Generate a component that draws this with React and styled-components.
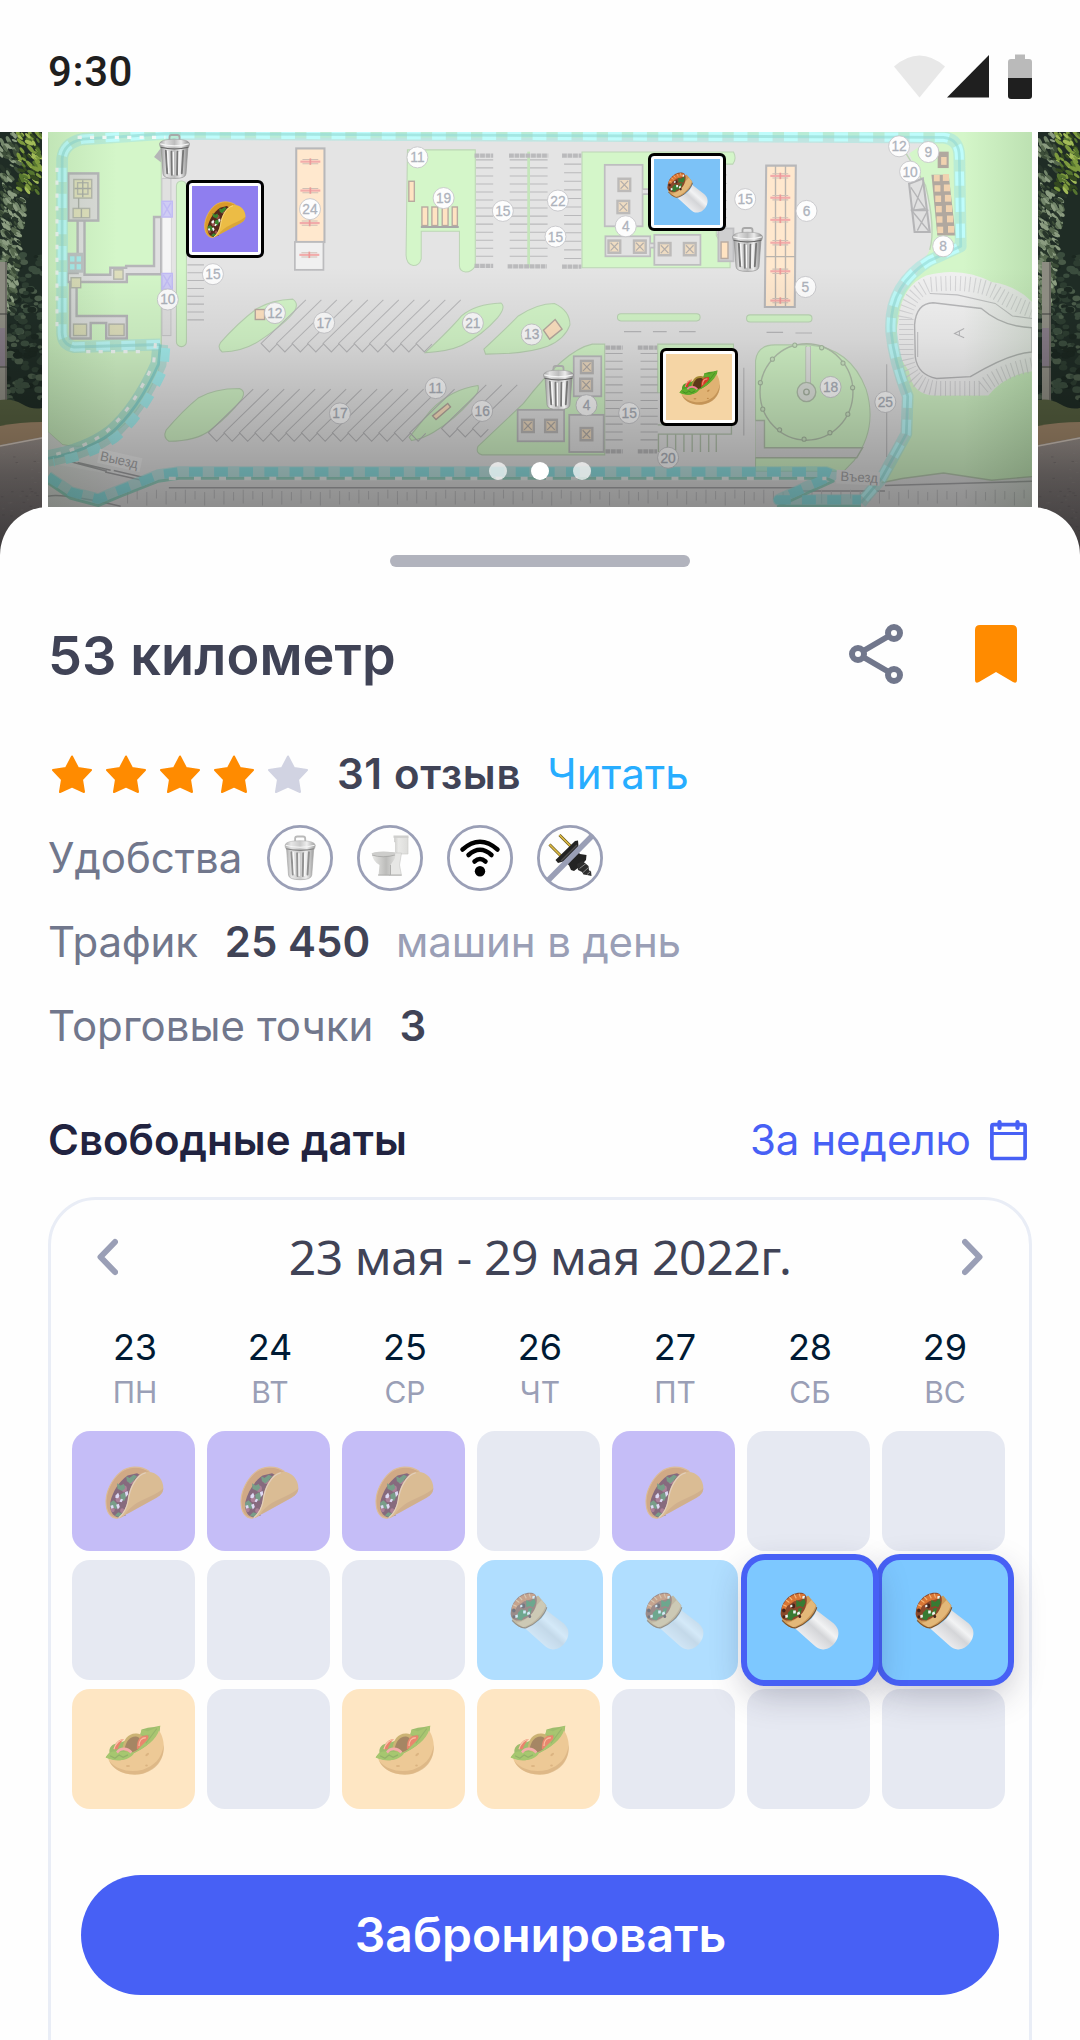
import React from "react";
import styled, { createGlobalStyle } from "styled-components";

const GlobalStyle = createGlobalStyle`
  *, *::before, *::after { box-sizing: border-box; }
  body { margin: 0; background: #fff; }
`;

/* ---------- layout ---------- */

const Screen = styled.main`
  width: 1080px;
  height: 2040px;
  overflow: hidden;
  background: #fefefe;
  font-family: Inter, "Noto Sans", sans-serif;
  display: flex;
  flex-direction: column;
`;

const StatusBar = styled.header`
  flex: none;
  height: 132px;
  padding: 11px 48px 0 48px;
  display: flex;
  align-items: center;
  justify-content: space-between;
`;

const Clock = styled.span`
  font: 500 42px/50px Roboto, sans-serif;
  letter-spacing: 0.6px;
  color: #1f1f1f;
`;

const StatusIcons = styled.div`
  display: flex;
  align-items: center;
  padding-top: 10px;
`;

const Hero = styled.section`
  flex: none;
  display: grid;
  grid-template-columns: 42px 984px 42px;
  column-gap: 6px;
  align-items: start;
  height: 430px;
  margin-bottom: -55px;
`;

const PhotoSlide = styled.svg`
  display: block;
  width: 42px;
  height: 430px;
`;

const MapSlide = styled.div`
  position: relative;
  height: 375px;
  overflow: hidden;
`;

const MapDrawing = styled.svg`
  display: block;
  width: 984px;
  height: 375px;
`;

const MapPin = styled.div`
  position: absolute;
  left: ${(p) => p.$x}px;
  top: ${(p) => p.$y}px;
  line-height: 0;
`;

const StallPin = styled(MapPin)`
  width: 78px;
  height: 78px;
  display: grid;
  place-items: center;
  border: 3px solid #000;
  border-radius: 6px;
  background: ${(p) => p.$color};
  box-shadow: inset 0 0 0 3px #fff;
`;

const Dots = styled.div`
  position: absolute;
  left: 0;
  right: 0;
  bottom: 27px;
  display: flex;
  justify-content: center;
  gap: 24px;
`;

const Dot = styled.i`
  width: 18px;
  height: 18px;
  border-radius: 50%;
  background: #fff;
  opacity: ${(p) => (p.$active ? 1 : 0.7)};
`;

const Sheet = styled.section`
  position: relative;
  flex: 1;
  min-height: 0;
  padding: 48px 48px 0;
  display: flex;
  flex-direction: column;
  background: #fefefe;
  border-radius: 48px 48px 0 0;
`;

const Handle = styled.div`
  flex: none;
  align-self: center;
  width: 300px;
  height: 12px;
  border-radius: 6px;
  background: #b1b3bd;
`;

const TitleRow = styled.div`
  flex: none;
  height: 66px;
  margin-top: 54px;
  padding-right: 15px;
  display: flex;
  align-items: center;
`;

const Title = styled.h1`
  flex: 1;
  margin: 0;
  padding-top: 3px;
  font-size: 54px;
  line-height: 66px;
  font-weight: 600;
  color: #404356;
  letter-spacing: 0.1px;
`;

const IconButton = styled.button`
  margin: 0 0 0 ${(p) => p.$gap || 0}px;
  padding: 0;
  border: 0;
  background: none;
  line-height: 0;
`;

const Facts = styled.div`
  flex: none;
  margin-top: 45px;
`;

const FactRow = styled.div`
  height: 84px;
  display: flex;
  align-items: center;
`;

const tones = {
  label: "#71778c",
  muted: "#9a9fb6",
  strong: "#404356",
  link: "#27adff",
};

const FactText = styled.span`
  font-size: 42px;
  line-height: 50px;
  white-space: nowrap;
  font-weight: ${(p) => (p.$tone === "strong" ? 600 : 400)};
  color: ${(p) => tones[p.$tone]};
  margin-left: ${(p) => p.$gap || 0}px;
  letter-spacing: ${(p) => p.$track || 0}px;
`;

const Stars = styled.div`
  display: flex;
  gap: 14px;
  padding-left: 4px;
  width: 288px;
`;

const Amenities = styled.div`
  display: flex;
  gap: 24px;
  margin-left: ${(p) => p.$gap}px;
`;

const DatesHeader = styled.div`
  flex: none;
  height: 60px;
  margin-top: 42px;
  display: flex;
  align-items: center;
  justify-content: space-between;
`;

const DatesTitle = styled.h2`
  margin: 0;
  font-size: 42px;
  line-height: 50px;
  font-weight: 600;
  color: #212340;
`;

const WeekLink = styled.div`
  display: flex;
  align-items: center;
  gap: 19px;
  padding-right: 5px;
  font-size: 42px;
  line-height: 50px;
  color: #4760f5;
`;

const Card = styled.div`
  flex: none;
  height: 900px;
  margin-top: 27px;
  padding: 27px 18px 0 21px;
  border: 3px solid #e9edf6;
  border-radius: 48px;
`;

const WeekNav = styled.div`
  height: 60px;
  padding: 0 28px 0 25px;
  display: flex;
  align-items: center;
  justify-content: space-between;
`;

const WeekRange = styled.span`
  font: 400 48px/60px "Noto Sans", sans-serif;
  letter-spacing: -0.42px;
  color: #404356;
`;

const WeekGrid = styled.div`
  display: grid;
  grid-template-columns: repeat(7, 126px);
  gap: 9px;
  margin-top: ${(p) => p.$top}px;
`;

const Day = styled.div`
  text-align: center;
`;

const DayNumber = styled.div`
  font-size: 36px;
  line-height: 44px;
  color: #001a34;
`;

const DayName = styled.div`
  font-size: 30px;
  line-height: 46px;
  color: #9a9fb6;
`;

const Slot = styled.div`
  position: relative;
  width: ${(p) => (p.$wide ? 126 : 123)}px;
  height: 120px;
  padding: 2px 0 0 33px;
  display: flex;
  align-items: center;
  border-radius: 18px;
  background: ${(p) => p.$color};
  ${(p) =>
    p.$selected &&
    `
    z-index: ${p.$layer};
    box-shadow: 0 0 0 6px #4760f5, 0 12px 34px 2px rgba(40, 40, 70, 0.28);
  `}
`;

const Meal = styled.span`
  line-height: 0;
  opacity: ${(p) => (p.$dim ? 0.55 : 1)};
`;

const BookButton = styled.button`
  display: flex;
  align-items: center;
  justify-content: center;
  width: 918px;
  height: 120px;
  margin: 66px 0 0 9px;
  padding: 0 0 0 1px;
  border: 0;
  border-radius: 60px;
  background: #4760f5;
  color: #fff;
  font: 600 48px/58px Inter, sans-serif;
`;

/* ---------- food ---------- */

const Taco = ({ w, h }) => (
  <svg width={w} height={h} viewBox="305 160 175 133" preserveAspectRatio="none">
    <path d="M343 291C322 292 307 276 308 247C309 222 326 193 350 176C374 160 408 158 437 174L395 215L350 285Z" fill="#d99a2b" />
    <path d="M343 291C322 292 307 276 308 247C309 222 326 193 350 176C374 160 408 158 437 174" fill="none" stroke="#f0bc48" strokeWidth="3" />
    <path d="M321 250C328 225 345 200 372 184L400 178L416 186L388 225L366 284L345 289C326 286 318 272 321 250Z" fill="#54281c" />
    <g fill="#96504a">
      <circle cx="362" cy="217" r="8" /><circle cx="383" cy="197" r="8" /><circle cx="344" cy="244" r="7" /><circle cx="328" cy="270" r="6" /><circle cx="356" cy="272" r="6" />
    </g>
    <g fill="#3b8530">
      <path d="M341 203l10 6 10 -4 4 10 -9 8 -14 -6z" /><path d="M368 186l10 4 12-8 10 4-12 12-8 6-10-6z" /><path d="M320 252l10-6 10 8 6 10-10 4-6-4-9 0z" /><path d="M350 232l12-6 6 10-6 12-10-4z" /><path d="M334 284l10-8 14 4-8 9z" />
    </g>
    <g fill="#f3f3f5">
      <path d="M336 234l8-7 4 8-4 6-8-1z" /><path d="M364 226l8-3 2 8-7 7z" /><path d="M321 260l8-2 2 7-7 2z" /><path d="M338 257l8-2 3 8-6 6z" /><path d="M352 242l7 2-5 7-6-2z" />
    </g>
    <path d="M343 291C357 280 368 268 372 246C376 216 396 180 424 175C456 170 479 194 478 216C477 230 466 236 455 241L373 279C360 285 352 292 343 291Z" fill="#ecbc45" />
    <path d="M373 279L455 241C466 236 477 230 478 216C468 226 440 236 415 246C395 254 378 264 365 281Z" fill="#cf9830" opacity=".6" />
    <path d="M346 290C361 279 370 265 374 246C378 216 398 182 426 177" fill="none" stroke="#fbdf90" strokeWidth="3" />
  </svg>
);

const Burrito = ({ w, h }) => (
  <svg width={w} height={h} viewBox="697 468 170 145" preserveAspectRatio="none">
    <defs>
      <linearGradient id="foil" x1="0" y1="1" x2="1" y2="0">
        <stop offset=".2" stopColor="#f4f4f6" /><stop offset=".5" stopColor="#d4d5d8" /><stop offset=".62" stopColor="#f2f3f4" /><stop offset="1" stopColor="#b9bbc0" />
      </linearGradient>
    </defs>
    <path d="M737 556C752 561 798 536 801 513L852 547C863 556 868 566 864 579C860 594 845 608 826 611C814 613 804 608 796 602Z" fill="url(#foil)" />
    <path d="M699 520C700 545 722 558 737 558C760 555 797 530 802 502L778 477Z" fill="#cf9a58" />
    <path d="M703 539C713 549 731 560 744 557C765 551 795 530 803 506" fill="none" stroke="#7f5227" strokeWidth="3" />
    <path d="M715 545C740 545 765 520 775 500L788 488L800 502C790 530 755 552 735 556Z" fill="#e9c184" opacity=".75" />
    <path d="M699 523C699 494 726 468 758 470C780 472 776 497 767 513C755 532 731 542 715 539C706 537 699 530 699 523Z" fill="#8b482b" />
    <path d="M702 507C714 480 744 467 770 474L764 485L738 491L718 503L708 519Z" fill="#d97635" />
    <path d="M706 500l10 4M714 488l10 6M724 480l8 8M738 474l6 10M752 472l4 10" stroke="#f6b878" strokeWidth="3" />
    <g fill="#377b33">
      <path d="M744 488l11 5 12-9 4 10-7 12-10-3-10 3z" /><path d="M720 520l10-9 13 4 7 12-14 4-6 8-13-4z" /><path d="M750 509l11-1-5 15-9-2z" />
    </g>
    <g fill="#44251b">
      <circle cx="708" cy="514" r="5" /><circle cx="735" cy="503" r="6" /><circle cx="708" cy="530" r="4" /><circle cx="754" cy="529" r="4" />
    </g>
    <g fill="#eef6f2">
      <path d="M735 514l8 0-1 8-7 0z" /><path d="M712 526l7-2 1 7-7 2z" /><path d="M746 520l7-4 2 7-8 3z" /><path d="M762 478l7 0-2 7-6-1z" /><path d="M726 502l6-3 1 6-6 2z" />
    </g>
  </svg>
);

const Pita = ({ w, h }) => (
  <svg width={w} height={h} viewBox="305 797 172 122" preserveAspectRatio="none">
    <path d="M307 876L318 864C316 852 326 842 342 842L395 826L408 820L412 808L430 804L448 802L466 799L462 830L420 866L350 888Z" fill="#4e9d27" />
    <path d="M330 856C334 840 346 831 360 831C352 838 344 848 342 856Z" fill="#d83427" />
    <path d="M331 856C336 842 348 833 358 833" fill="none" stroke="#f6b6a0" strokeWidth="3" />
    <path d="M356 856C358 832 374 816 398 818C420 820 424 838 414 852L380 868Z" fill="#a58a34" />
    <path d="M362 856C366 836 378 824 396 825C410 826 412 842 404 856L384 864Z" fill="#5d3818" />
    <path d="M398 856C396 834 408 820 430 822L434 832L412 852Z" fill="#d8382a" />
    <path d="M404 848C404 836 412 828 424 828" fill="none" stroke="#f29b80" strokeWidth="4" />
    <path d="M314 879C340 886 366 885 380 869C402 861 440 848 460 808C474 822 480 846 474 866C466 896 430 918 390 918C350 918 322 900 314 879Z" fill="#e0b273" />
    <path d="M318 885C340 908 380 914 415 906C448 897 470 880 476 846C480 884 448 914 400 918C356 920 326 904 318 885Z" fill="#b08144" opacity=".6" />
    <path d="M307 876C316 864 324 860 340 862L378 862L390 864C384 880 346 888 318 880Z" fill="#5fae2c" />
    <path d="M340 864C350 852 370 853 382 864" fill="none" stroke="#ee8097" strokeWidth="7" />
    <path d="M320 872l14 6 12-8 12 6 14-6" fill="none" stroke="#3d8520" strokeWidth="3" />
    <path d="M408 820L412 808L430 812L466 799C462 824 438 846 392 864C410 846 430 838 436 820L420 822Z" fill="#62ab2e" />
    <path d="M424 842L456 806" fill="none" stroke="#428c22" strokeWidth="3" />
    <g fill="#c08c4c">
      <ellipse cx="428" cy="869" rx="6" ry="3" transform="rotate(-30 428 869)" /><ellipse cx="372" cy="897" rx="6" ry="2.5" /><ellipse cx="426" cy="896" rx="4" ry="2.5" />
    </g>
  </svg>
);

const foods = {
  taco: { Icon: Taco, full: "#8c7df0", busy: "#c5bdf7", h: 53 },
  burrito: { Icon: Burrito, full: "#7dc8ff", busy: "#b0deff", h: 58 },
  pita: { Icon: Pita, full: "#fdcf89", busy: "#fee6c3", h: 50 },
};

/* ---------- icons ---------- */

const BinShape = ({ id }) => (
  <g>
    <defs>
      <linearGradient id={id} x1="0" x2="1">
        <stop offset="0" stopColor="#9c9c9c" /><stop offset=".2" stopColor="#e2e2e2" /><stop offset=".5" stopColor="#bdbdbd" /><stop offset=".72" stopColor="#ececec" /><stop offset="1" stopColor="#868686" />
      </linearGradient>
    </defs>
    <path d="M10.5 6V3.2Q10.5 1 12.7 1H18.3Q20.5 1 20.5 3.2V6" fill="none" stroke="#a8a8a8" strokeWidth="1.8" />
    <path d="M2 12L4 38Q4.300 42.500 15.500 42.500Q26.700 42.500 27 38L29 12Z" fill={`url(#${id})`} stroke="#8d8d8d" strokeWidth=".6" />
    <path d="M6.800 16L8.200 37.500M12.500 17L12.900 39M18.500 17L18.100 39M24.200 16L22.800 37.500" stroke="#777" strokeWidth="1.900" strokeLinecap="round" />
    <path d="M8.600 16L9.900 37.500M14.300 17L14.500 39M20.200 17L19.800 39" stroke="#f8f8f8" strokeWidth="1.300" />
    <path d="M.5 9.500Q.8 5 15.500 5Q30.200 5 30.500 9.500L30 12.200Q15.500 15.500 1 12.200Z" fill={`url(#${id})`} stroke="#979797" strokeWidth=".5" />
    <path d="M1.200 9.400Q15.500 13.200 29.800 9.400" fill="none" stroke="#f4f4f4" strokeWidth="1.100" />
    <path d="M1.500 12.700Q15.500 15.900 29.500 12.700" fill="none" stroke="#666" strokeWidth="1" />
  </g>
);

const Bin = ({ id }) => (
  <svg width="31" height="45" viewBox="0 0 31 43" preserveAspectRatio="none">
    <BinShape id={id} />
  </svg>
);

const Ring = ({ children, slashed }) => (
  <svg width="66" height="66" viewBox="0 0 66 66">
    {children}
    <circle cx="33" cy="33" r="31.600" fill="none" stroke="#9a9fb6" strokeWidth="2.800" />
    {slashed && <path d="M11 55.500L55 11" stroke="#9a9fb6" strokeWidth="5.500" />}
  </svg>
);

const BinAmenity = () => (
  <Ring>
    <g transform="translate(17.500 10.500) scale(1.010 1.040)" opacity=".8">
      <BinShape id="binRing" />
    </g>
  </Ring>
);

const ToiletAmenity = () => (
  <Ring>
    <defs>
      <linearGradient id="bowl" x1="0" x2="1">
        <stop offset="0" stopColor="#e9e9e7" /><stop offset=".6" stopColor="#bcbcba" /><stop offset="1" stopColor="#dededc" />
      </linearGradient>
      <linearGradient id="tank" x1="0" x2="1">
        <stop offset="0" stopColor="#cfcfcd" /><stop offset=".3" stopColor="#e9e9e7" /><stop offset="1" stopColor="#dcdcda" />
      </linearGradient>
    </defs>
    <path d="M37.500 12H51V29H38.500V17H37.500Z" fill="url(#tank)" stroke="#cacac8" strokeWidth=".6" />
    <path d="M36.500 10.500H51.500V12.800H36.500Z" fill="#cfcfcd" />
    <path d="M37 28H44.500L42.500 40L44.500 50.500H32V38Z" fill="#e7e7e5" stroke="#c6c6c4" strokeWidth=".6" />
    <path d="M15 29Q15 27 27 27H38.500Q39 33 35.500 37L33.500 40V50.500H21.500L22.500 40Q15.500 36 15 29Z" fill="url(#bowl)" />
    <ellipse cx="26.500" cy="28.800" rx="12" ry="2.200" fill="#cdcdcb" />
    <path d="M15 30Q26 33.500 38 30" fill="none" stroke="#a9a9a7" strokeWidth=".9" />
    <path d="M33.500 40V50M21 50H44.500" stroke="#b0b0ae" strokeWidth="1" />
  </Ring>
);

const WifiAmenity = () => (
  <Ring>
    <g fill="none" stroke="#000" strokeWidth="4.500" strokeLinecap="round">
      <path d="M15.500 24.500Q33 9 50.500 24.500" />
      <path d="M21.500 30Q33 19.500 44.500 30" />
      <path d="M27.500 36.500Q33 31.500 38.500 36.500" />
    </g>
    <circle cx="33" cy="46.300" r="5.200" fill="#000" />
  </Ring>
);

const PlugAmenity = () => (
  <Ring slashed>
    <path d="M12.500 19.500L25 32M22.500 10L35 22.500" stroke="#6b5a22" strokeWidth="3" />
    <path d="M12.500 19.500L25 32M22.500 10L35 22.500" stroke="#e0bd45" strokeWidth="1.600" />
    <path d="M18.500 35L38 16L41 15.500L41.500 21L39 25L43 29L49.500 30L49 35L43.500 41L37 46L34 45L32 40.500L28 36L21 38Z" fill="#232323" />
    <path d="M24 36L40 20" stroke="#4d4d4d" strokeWidth="1.500" />
    <path d="M40 39L45.500 36L51.500 41L52 45.500L54 46L54.500 51L50 50L46.500 49.500L45 47L41 45Z" fill="#2d2d2d" />
    <path d="M42.500 43.500L49 38.500M46 47.500L51.500 42.500M50 49.500L53.500 46.500" stroke="#8a8a8a" strokeWidth="1" />
  </Ring>
);

const Star = ({ on }) => (
  <svg width="40" height="39" viewBox="0 0 40 39">
    <path
      d="M20 1.500L26 13L39 15L30 24.500L32 37L20 31.500L8 37L10 24.500L1 15L14 13Z"
      fill={on ? "#ff8b00" : "#d1d3e2"}
      stroke={on ? "#ff8b00" : "#d1d3e2"}
      strokeWidth="2"
      strokeLinejoin="round"
    />
  </svg>
);

const ShareIcon = () => (
  <svg width="54" height="60" viewBox="0 0 54 60">
    <g fill="none" stroke="#71778c">
      <path d="M9 30L45 9M9 30L45 51" strokeWidth="5.500" />
      <g fill="#fefefe" strokeWidth="6">
        <circle cx="45" cy="9" r="6" /><circle cx="9" cy="30" r="6" /><circle cx="45" cy="51" r="6" />
      </g>
    </g>
  </svg>
);

const BookmarkIcon = () => (
  <svg width="42" height="58" viewBox="0 0 42 58">
    <path d="M5 0H37Q42 0 42 5V55Q42 59 38 57L21 47L4 57Q0 59 0 55V5Q0 0 5 0Z" fill="#ff8b00" />
  </svg>
);

const CalendarIcon = () => (
  <svg width="37" height="41" viewBox="0 0 37 41">
    <g fill="none" stroke="#4760f5" strokeWidth="3.700">
      <rect x="1.900" y="4.700" width="33.200" height="33.800" rx="1.500" />
      <path d="M2 13.500H35" strokeWidth="3.200" />
      <path d="M9.500 2.100V8M27.500 2.100V8" strokeWidth="4.200" strokeLinecap="round" />
    </g>
  </svg>
);

const Chevron = ({ back }) => (
  <svg width="21" height="38" viewBox="0 0 21 38">
    <path d={back ? "M18 4L3.500 19L18 34" : "M3 4L17.500 19L3 34"} fill="none" stroke="#9a9fb6" strokeWidth="6" strokeLinecap="round" strokeLinejoin="round" />
  </svg>
);

const PhoneStatus = () => (
  <svg width="138" height="45" viewBox="0 0 138 45">
    <path d="M0 12.500Q25.500 -9.500 51 12.500L25.500 43.500Z" fill="#e8e8e8" />
    <path d="M53 43.500L95 1V43.500Z" fill="#1f1f1f" />
    <path d="M114 25V8Q114 5 117 5H121V.5H131V5H135Q138 5 138 8V25Z" fill="#bababa" />
    <path d="M114 24H138V42Q138 45 135 45H117Q114 45 114 42Z" fill="#1f1f1f" />
  </svg>
);

/* ---------- roadside photo ---------- */

const range = (n) => Array.from({ length: n }, (_, i) => i);

const noise = (n) => {
  const v = Math.sin(n * 127.1 + 11.7) * 43758.5453;
  return v - Math.floor(v);
};

const canopy = range(420).map((i) => {
  const y = noise(i) * 180;
  const reach = y < 60 ? 42 : 34 - y * 0.12;
  const x = noise(i + 1000) * reach;
  const bright = x > 18 && y < 60;
  const tints = bright ? ["#7d9a3e", "#a2bb58", "#56752f", "#33481f"] : ["#57694f", "#73866a", "#3c4d38", "#8b9c80", "#27352a"];
  return { x, y, w: 2 + noise(i + 2000) * 3, r: 20 + noise(i + 3000) * 50, fill: tints[Math.floor(noise(i + 4000) * tints.length)] };
});

const shrubs = range(170).map((i) => ({
  x: noise(i + 5000) * 44,
  y: 120 + noise(i + 6000) * 150,
  w: 2 + noise(i + 7000) * 3,
  fill: ["#2d3d31", "#3b4d3e", "#1b2720", "#4a5b49"][Math.floor(noise(i + 8000) * 4)],
}));

const Roadside = ({ id, poleX }) => (
  <PhotoSlide viewBox="0 0 42 430" preserveAspectRatio="none">
    <defs>
      <linearGradient id={`${id}shade`} x1="0" y1="0" x2="0" y2="1">
        <stop offset=".4" stopColor="#000" stopOpacity="0" /><stop offset="1" stopColor="#000" stopOpacity=".5" />
      </linearGradient>
      <linearGradient id={`${id}road`} x1="0" y1="0" x2="0" y2="1">
        <stop offset="0" stopColor="#9a918c" /><stop offset=".3" stopColor="#87807e" /><stop offset="1" stopColor="#726c70" />
      </linearGradient>
    </defs>
    <rect width="42" height="300" fill="#1f2c25" />
    {shrubs.map((s, i) => <ellipse key={i} cx={s.x} cy={s.y} rx={s.w} ry={s.w * 0.7} fill={s.fill} />)}
    {canopy.map((c, i) => (
      <ellipse key={i} cx={c.x} cy={c.y} rx={c.w} ry={c.w * 0.42} fill={c.fill} transform={`rotate(${c.r} ${c.x} ${c.y})`} />
    ))}
    <rect x={poleX} y="130" width="9" height="150" fill="#8d8c82" />
    <rect x={poleX} y="196" width="9" height="38" fill="#857b86" />
    <rect x={poleX + 7} y="130" width="2" height="150" fill="#6c6b64" />
    <path d={`M${poleX} 182h9M${poleX} 235h9`} stroke="#3f3e3d" strokeWidth="1.200" />
    <path d="M0 268Q12 266 22 272T42 276V294H0Z" fill="#566040" />
    <path d="M0 294Q20 290 42 290V312L0 316Z" fill="#a0876a" />
    <path d="M0 313L42 305V430H0Z" fill={`url(#${id}road)`} />
    <path d="M0 314L42 306" stroke="#d2c6bb" strokeWidth="1.500" />
    {range(60).map((i) => (
      <rect key={i} x={noise(i + 9000) * 42} y={320 + noise(i + 9500) * 105} width="2.500" height="1" fill={i % 2 ? "#9c9491" : "#5f5a5c"} opacity=".35" />
    ))}
    <rect width="42" height="430" fill={`url(#${id}shade)`} />
  </PhotoSlide>
);

/* ---------- parking map ---------- */

const Badge = ({ x, y, n }) => (
  <g>
    <ellipse cx={x} cy={y} rx="30.500" ry="29.500" fill="#fdfdfd" stroke="#c6c6c9" strokeWidth="2.500" />
    <text x={x} y={y + 14} textAnchor="middle" fontFamily="Liberation Sans, sans-serif" fontSize="40" fill="#aeb3bc" stroke="#aeb3bc" strokeWidth=".8">{n}</text>
  </g>
);

const Bays = ({ x, w, y, n, step }) => (
  <path d={range(n).map((i) => `M${x} ${y + i * step}h${w}`).join("")} stroke="#b9b9bb" strokeWidth="3" />
);

const SlantBays = ({ x, y, n }) => (
  <path
    d={range(n).map((i) => `M${x + i * 45} ${y}L${x - 130 + i * 45} ${y + 122}l24 24l22 -22`).join("")}
    fill="none" stroke="#bababc" strokeWidth="3"
  />
);

const Booth = ({ x, y }) => (
  <g transform={`translate(${x} ${y})`}>
    <rect x="-17" y="-17" width="34" height="34" fill="#efdcc2" stroke="#bcbab9" strokeWidth="7" />
    <path d="M-11 -11L11 11M11 -11L-11 11" stroke="#b3aeaa" strokeWidth="3.500" />
  </g>
);

const Pump = ({ x, y, w = 58 }) => (
  <g>
    <path d={`M${x + 6} ${y - 6}h${w - 12}M${x + 6} ${y + 6}h${w - 12}`} stroke="#cfc0b5" strokeWidth="3" />
    <path d={`M${x} ${y}h${w}`} stroke="#f2abaa" strokeWidth="6" />
    <path d={`M${x + w / 2} ${y - 9}v18`} stroke="#eb9a99" strokeWidth="5" />
  </g>
);

const borderPath =
  "M465 965L215 972Q178 965 180 925V445Q185 400 240 390L480 375L2740 385Q2786 390 2786 440L2790 690L2700 730Q2580 800 2588 930Q2596 1010 2636 1110L2632 1215L2560 1340L2500 1408";
const exitPath = "M465 965L460 1020Q400 1150 320 1215Q250 1265 139 1284";
const roadPath = "M139 1335L205 1378L285 1398L350 1372L460 1330L520 1322H2400L2420 1330L2260 1400H2500";

const ParkingMap = () => (
  <MapDrawing viewBox="139 370 2858 1050" preserveAspectRatio="none">
    <defs>
      <linearGradient id="mapShade" x1="0" y1="0" x2="0" y2="1">
        <stop offset=".36" stopColor="#000" stopOpacity="0" /><stop offset=".55" stopColor="#000" stopOpacity=".07" /><stop offset="1" stopColor="#000" stopOpacity=".36" />
      </linearGradient>
      <linearGradient id="sideShade">
        <stop offset="0" stopColor="#3a6a30" stopOpacity=".12" /><stop offset=".07" stopColor="#3a6a30" stopOpacity="0" /><stop offset=".93" stopColor="#3a6a30" stopOpacity="0" /><stop offset="1" stopColor="#3a6a30" stopOpacity=".15" />
      </linearGradient>
    </defs>
    <rect x="139" y="370" width="2858" height="1050" fill="#e4e4e4" />

    <g fill="#d4f6c9" stroke="#bcd5b5" strokeWidth="3">
      <path d="M139 370H560L468 400V965L460 1040Q400 1170 320 1220Q260 1262 180 1245L139 1210Z" />
      <path d="M2735 370H2997V1335L2880 1345L2740 1325L2620 1340L2560 1352L2640 1220V1110L2590 990L2585 860L2660 770L2700 700V560L2640 430Z" stroke="none" />
      <path d="M139 370H2735V386H139Z" stroke="none" />
      <rect x="512" y="507" width="29" height="464" rx="14" />
      <path d="M1183 420H1380V745Q1370 762 1352 762Q1335 760 1334 745V648H1223V725Q1218 744 1200 744Q1180 740 1179 715Z" />
      <path d="M640 960Q690 905 745 865Q790 840 850 838Q868 850 855 872Q830 905 760 950Q710 985 645 986Q630 975 640 960Z" />
      <path d="M1235 988Q1310 920 1340 885Q1380 852 1455 849Q1470 860 1445 890Q1400 940 1340 968Q1300 985 1235 988Z" />
      <path d="M1405 978Q1470 920 1505 885Q1560 850 1610 850Q1655 870 1655 910Q1640 950 1590 970Q1530 992 1410 992Z" />
      <path d="M482 1205Q530 1150 575 1115Q620 1088 695 1088Q715 1095 702 1118Q665 1165 610 1205Q570 1235 490 1236Q472 1225 482 1205Z" />
      <path d="M1188 1225Q1225 1180 1250 1150Q1310 1090 1388 1080Q1395 1095 1370 1120Q1320 1175 1260 1210Q1230 1228 1195 1234Z" />
      <path d="M1388 1250L1520 1130Q1640 980 1720 964H1756V1274H1400Q1380 1270 1388 1250Z" />
      <path d="M1690 426H2130Q2140 445 2128 460H2080V660L2120 720V750H1690Z" />
      <path d="M2194 1310V1010Q2200 966 2250 966H2350Q2470 975 2515 1090Q2550 1200 2480 1290L2450 1320H2194Z" />
      <rect x="1793" y="879" width="240" height="20" rx="10" />
      <rect x="2168" y="882" width="190" height="20" rx="10" />
      <path d="M1910 964H2130V1100H1910Z" />
    </g>
    <path d="M2600 390L2690 520Q2720 640 2700 700L2660 770L2590 850V390Z" fill="#e4e4e4" />
    <path d="M2612 400L2688 520Q2718 640 2700 700" fill="none" stroke="#bcd5b5" strokeWidth="4" />

    <g fill="#e0e0e1" stroke="#b6b6b9" strokeWidth="7">
      <path d="M225 615H245V770H320V750H366V745H447V608H468V768H368V790H222V885H368V948H308V905H263V948H203V790H196V765H225Z" />
      <rect x="198" y="486" width="87" height="132" fill="#dadbd8" />
    </g>
    <g fill="#dfdfbd" stroke="#b5b7ad" strokeWidth="4">
      <rect x="214" y="503" width="52" height="52" /><rect x="225" y="512" width="30" height="32" />
      <rect x="212" y="584" width="48" height="26" /><rect x="206" y="778" width="28" height="28" />
      <rect x="330" y="756" width="27" height="26" /><rect x="213" y="908" width="38" height="32" />
      <rect x="316" y="908" width="44" height="32" />
    </g>
    <path d="M240 505v48M216 528h48M228 555v30M236 585v25" stroke="#aaada7" strokeWidth="4" />
    <rect x="194" y="708" width="48" height="56" fill="#bfc3c5" />
    <g fill="#a9ecee">
      <rect x="203" y="718" width="13" height="15" /><rect x="222" y="718" width="13" height="15" /><rect x="203" y="740" width="13" height="15" /><rect x="222" y="740" width="13" height="15" />
    </g>
    <rect x="470" y="500" width="26" height="440" fill="#e0e0e0" stroke="#c8c8ca" strokeWidth="3" />
    <rect x="472" y="610" width="24" height="155" fill="#f5f5f5" />
    <g fill="#cfccf4" stroke="#c0bbf4" strokeWidth="4">
      <rect x="470" y="564" width="30" height="44" /><rect x="470" y="766" width="30" height="44" />
      <path d="M474 568l22 36M496 568l-22 36M474 770l22 36M496 770l-22 36" />
    </g>
    <path d="M447 440l20-25v40z" fill="#b5b5b7" />

    <rect x="860" y="416" width="82" height="262" fill="#ffe8ce" stroke="#b8b8ba" strokeWidth="6" />
    <rect x="856" y="678" width="83" height="78" fill="#f0f0f0" stroke="#bcbcbe" strokeWidth="5" />
    <Pump x={872} y={453} /><Pump x={872} y={534} /><Pump x={870} y={625} /><Pump x={869} y={714} />

    <g fill="#ffe3c2" stroke="#b8aaa0" strokeWidth="4">
      <rect x="1187" y="508" width="16" height="56" />
      <rect x="1225" y="580" width="17" height="52" /><rect x="1254" y="580" width="17" height="52" /><rect x="1284" y="580" width="17" height="52" /><rect x="1313" y="580" width="15" height="52" />
      <path d="M1256 1165L1300 1130L1308 1140L1266 1175Z" />
      <path d="M1578 925L1612 895L1632 922L1596 950Z" />
      <rect x="741" y="867" width="27" height="28" />
    </g>
    <path d="M1222 636H1332" stroke="#a8a8a8" strokeWidth="6" />

    <Bays x={1382} w={50} y={448} n={13} step={22.5} />
    <Bays x={1480} w={110} y={448} n={13} step={22.5} />
    <Bays x={1638} w={50} y={460} n={12} step={24} />
    <Bays x={544} w={48} y={742} n={8} step={22} />
    <Bays x={2082} w={28} y={490} n={8} step={24} />
    <Bays x={1758} w={50} y={990} n={12} step={22} />
    <Bays x={1860} w={50} y={990} n={12} step={22} />
    <path d="M1535 425V750" stroke="#c4e6ba" strokeWidth="8" />
    <path d="M1378 436h54M1478 436h114M1632 436h56M1378 745h54M1474 746h114M1632 747h56M1758 974h50M1852 974h56M1758 1264h50M1852 1264h56" stroke="#bababc" strokeWidth="12" strokeDasharray="14 2" />

    <SlantBays x={888} y={840} n={11} />
    <SlantBays x={735} y={1090} n={14} />
    <SlantBays x={1412} y={1078} n={3} />

    <g fill="#e2e2e2" stroke="#bebec0" strokeWidth="5">
      <rect x="1756" y="462" width="110" height="172" /><rect x="1758" y="662" width="130" height="56" />
      <rect x="1900" y="658" width="134" height="84" /><path d="M1866 530h20v14h-20M1888 682h12v12h-12" />
      <rect x="2086" y="640" width="44" height="92" fill="#cfcfd0" />
      <rect x="1666" y="998" width="80" height="112" /><rect x="1653" y="1162" width="100" height="104" />
      <rect x="1503" y="1148" width="135" height="88" />
    </g>
    {[[1813, 518], [1810, 580], [1784, 691], [1858, 691], [1930, 698], [2003, 698], [1704, 1028], [1702, 1078], [1703, 1216], [1533, 1193], [1600, 1193]].map(([x, y]) => (
      <Booth key={`${x}-${y}`} x={x} y={y} />
    ))}
    <rect x="2094" y="678" width="20" height="46" fill="#ffe3c2" stroke="#b8aaa0" strokeWidth="4" />

    <path d="M2225 464H2311L2308 860H2221Z" fill="#ffe8ce" stroke="#b8b8ba" strokeWidth="6" />
    <path d="M2252 466V858M2281 466V858M2222 719H2309" stroke="#b9b4ae" strokeWidth="4" />
    {[493, 554, 616, 680, 760, 842].map((y) => <Pump key={y} x={2237} y={y} w={58} />)}
    <path d="M1812 929h50M1896 929h40M1972 929h48M2226 931h48M2310 933h48M2160 1030v190M2575 1020v260" stroke="#b9b9bb" strokeWidth="3" />

    <g fill="none" stroke="#b4c3ae" strokeWidth="4">
      <circle cx="2342" cy="1098" r="135" />
      <path d="M2341 970V1075M2353 970V1075" stroke="#bfc1bd" />
      <path d="M2194 1178H2220V1254H2505L2488 1282H2194" fill="#dcdcdc" />
      <path d="M1910 1190H2124V1216H1910M1912 1216v50M1938 1216v50M1962 1216v50M1986 1216v50M2010 1216v50M2034 1216v50M2058 1216v50M2080 1216v50" />
    </g>
    <path d="M2347 972V1080" stroke="#e4e6e3" strokeWidth="12" />
    <circle cx="2342" cy="1098" r="27" fill="#dfe4dd" stroke="#b4c3ae" strokeWidth="4" />
    <circle cx="2342" cy="1098" r="8" fill="none" stroke="#a9b5a4" strokeWidth="4" />
    {[[2308, 967], [2386, 974], [2448, 1017], [2476, 1086], [2462, 1160], [2410, 1212], [2335, 1230], [2264, 1204], [2215, 1146], [2208, 1072], [2243, 1006]].map(([x, y]) => (
      <circle key={`${x}-${y}`} cx={x} cy={y} r="6" fill="#cfe8c6" stroke="#a9bca3" strokeWidth="3" />
    ))}

    <path d="M2640 515L2680 500L2700 650H2656Z" fill="#e0e0e0" stroke="#b5b5b7" strokeWidth="6" />
    <path d="M2645 525l42 60-40 4 50 58M2682 510l-30 80 42 0-30 56" fill="none" stroke="#b5b5b7" strokeWidth="4" />
    <path d="M2705 490H2755L2775 660H2722Z" fill="#b1a89f" />
    <rect x="2723" y="425" width="32" height="46" fill="#b1a89f" />
    <g fill="#f0d2b0">
      <rect x="2733" y="440" width="16" height="22" />
      {range(6).map((i) => (
        <g key={i}>
          <rect x={2712 + i * 2} y={490 + i * 29} width="17" height="18" />
          <rect x={2738 + i * 3} y={488 + i * 29} width="18" height="19" />
        </g>
      ))}
    </g>

    <g fill="#f1f1f1">
      <path d="M2610 890Q2620 800 2690 772Q2790 745 2880 790Q2950 800 2997 845V1040Q2920 1050 2870 1108H2720Q2650 1110 2640 1040Q2590 980 2610 890Z" />
      <path d="M2628 890Q2640 820 2700 797Q2830 785 2890 818Q2940 850 2997 870M2997 1022Q2900 1040 2850 1088H2720Q2645 1080 2632 1000V890" fill="none" stroke="#d6d6d8" strokeWidth="42" strokeDasharray="3 11" />
      <path d="M2656 910Q2660 850 2710 848L2850 864Q2910 915 2997 918V986Q2930 990 2818 1055L2720 1060Q2665 1050 2658 1000Z" fill="#f3f3f3" stroke="#b9b9bb" strokeWidth="4" />
      <path d="M2700 822L2780 826L2890 850L2940 885L2997 892M2665 930V1000" fill="none" stroke="#c3c3c5" strokeWidth="3" />
    </g>
    <path d="M2800 920l-28 14 28 12M2786 927v14" fill="none" stroke="#bababc" strokeWidth="3" />

    <path d="M139 1210L180 1245L160 1300L460 1352L520 1345H2400L2560 1352L2620 1340L2740 1325L2880 1345L2997 1335V1420H139Z" fill="#dedede" />
    <path d="M2560 1352L2620 1340L2740 1325L2880 1345L2997 1335" fill="none" stroke="#b9cbb2" strokeWidth="4" />
    <path d="M200 1292l110 28M225 1295l96 22M305 1322l110 24M330 1318l90 20" stroke="#a3a3a5" strokeWidth="4" />
    <path d="M139 1390Q180 1380 350 1418M490 1366H2320M2290 1375H2570M2570 1360L2997 1348" fill="none" stroke="#a8a8aa" strokeWidth="4" />
    <path d={range(94).map((i) => `M${370 + i * 28} ${1372 + (i % 3) * 3}v${i % 2 ? 24 : 38}`).join("")} stroke="#c2c2c4" strokeWidth="3" />

    <g fill="none" strokeLinejoin="round">
      <path d={borderPath} stroke="#a6e6e0" strokeWidth="34" opacity=".6" />
      <path d={exitPath} stroke="#9fddd3" strokeWidth="46" opacity=".65" />
      <path d={roadPath} stroke="#9be0dc" strokeWidth="32" opacity=".55" />
      <path d={borderPath} stroke="#bffcfb" strokeWidth="26" strokeDasharray="40 33" />
      <path d={borderPath} stroke="#93d8d3" strokeWidth="8" opacity=".6" />
      <path d={exitPath} stroke="#7fcfca" strokeWidth="8" opacity=".8" />
      <path d={roadPath} stroke="#86cdb9" strokeWidth="8" opacity=".8" transform="translate(0 18)" />
      <path d={exitPath} stroke="#a5efef" strokeWidth="26" strokeDasharray="38 32" transform="translate(16 10)" />
      <path d={exitPath} stroke="#f0f6f4" strokeWidth="9" strokeDasharray="14 26" transform="translate(-14 -4)" />
      <path d="M165 470V930M250 985H410M225 385H480" stroke="#f3faf8" strokeWidth="9" strokeDasharray="12 24" />
      <path d={roadPath} stroke="#8fe0e2" strokeWidth="26" strokeDasharray="40 33" />
      <path d="M490 1340H2400" stroke="#e8eeec" strokeWidth="10" strokeDasharray="20 53" />
    </g>

    <g transform="translate(290 1257) rotate(12)">
      <rect width="126" height="40" fill="#eee" />
      <text x="5" y="32" fontFamily="Liberation Sans, sans-serif" fontSize="38" fill="#a9a9ab">Выезд</text>
    </g>
    <g transform="translate(2430 1316) rotate(3)">
      <rect width="126" height="38" fill="#e6e6e6" />
      <text x="12" y="30" fontFamily="Liberation Sans, sans-serif" fontSize="38" fill="#a9a9ab">Въезд</text>
    </g>

    {[[1212, 441, 11], [1288, 555, 19], [900, 586, 24], [1460, 591, 15], [618, 768, 15], [487, 839, 10], [798, 877, 12], [941, 904, 17], [1373, 905, 21], [1544, 937, 13], [1265, 1087, 11], [1400, 1151, 16], [987, 1158, 17], [1620, 562, 22], [1613, 663, 15], [1817, 634, 4], [2164, 558, 15], [2342, 591, 6], [2339, 804, 5], [2611, 410, 12], [2696, 426, 9], [2643, 481, 10], [2739, 690, 8], [2412, 1084, 18], [2571, 1126, 25], [1703, 1135, 4], [1827, 1157, 15], [1940, 1282, 20]].map(([x, y, n]) => (
      <Badge key={`${x}-${y}`} x={x} y={y} n={n} />
    ))}

    <rect x="139" y="370" width="2858" height="1050" fill="url(#sideShade)" />
    <rect x="139" y="370" width="2858" height="1050" fill="url(#mapShade)" />
  </MapDrawing>
);

/* ---------- data ---------- */

const days = [
  [23, "ПН"], [24, "ВТ"], [25, "СР"], [26, "ЧТ"], [27, "ПТ"], [28, "СБ"], [29, "ВС"],
];

const schedule = [
  { food: "taco", slots: ["busy", "busy", "busy", "", "busy", "", ""] },
  { food: "burrito", slots: ["", "", "", "busy", "busy", "picked", "picked"] },
  { food: "pita", slots: ["busy", "", "busy", "busy", "", "", ""] },
];

const ScheduleSlot = ({ food, state, layer }) => {
  if (!state) return <Slot $color="#e6e9f2" />;
  const { Icon, full, busy, h } = foods[food];
  const isBusy = state === "busy";
  return (
    <Slot $color={isBusy ? busy : full} $wide={food === "burrito"} $selected={!isBusy} $layer={layer}>
      <Meal $dim={isBusy}><Icon w={59} h={h} /></Meal>
    </Slot>
  );
};

export default function App() {
  return (
    <Screen>
      <GlobalStyle />
      <StatusBar>
        <Clock>9:30</Clock>
        <StatusIcons><PhoneStatus /></StatusIcons>
      </StatusBar>

      <Hero>
        <Roadside id="prev" poleX={-2} />
        <MapSlide>
          <ParkingMap />
          <MapPin $x={111} $y={2}><Bin id="binA" /></MapPin>
          <MapPin $x={684} $y={95}><Bin id="binB" /></MapPin>
          <MapPin $x={495} $y={233}><Bin id="binC" /></MapPin>
          <StallPin $x={138} $y={48} $color="#8f7eef"><Taco w={42} h={37} /></StallPin>
          <StallPin $x={600} $y={21} $color="#7cc2f7"><Burrito w={41} h={41} /></StallPin>
          <StallPin $x={612} $y={216} $color="#f5d5a5"><Pita w={41} h={35} /></StallPin>
          <Dots><Dot /><Dot $active /><Dot /></Dots>
        </MapSlide>
        <Roadside id="next" poleX={4} />
      </Hero>

      <Sheet>
        <Handle />
        <TitleRow>
          <Title>53 километр</Title>
          <IconButton aria-label="Поделиться"><ShareIcon /></IconButton>
          <IconButton $gap={72} aria-label="В закладки"><BookmarkIcon /></IconButton>
        </TitleRow>

        <Facts>
          <FactRow>
            <Stars>{range(5).map((i) => <Star key={i} on={i < 4} />)}</Stars>
            <FactText $tone="strong" $gap={1} $track={0.65}>31 отзыв</FactText>
            <FactText $tone="link" $gap={26} $track={0.1}>Читать</FactText>
          </FactRow>
          <FactRow>
            <FactText $tone="label">Удобства</FactText>
            <Amenities $gap={25}>
              <BinAmenity /><ToiletAmenity /><WifiAmenity /><PlugAmenity />
            </Amenities>
          </FactRow>
          <FactRow>
            <FactText $tone="label" $track={-0.2}>Трафик</FactText>
            <FactText $tone="strong" $gap={27}>25 450</FactText>
            <FactText $tone="muted" $gap={26} $track={-0.15}>машин в день</FactText>
          </FactRow>
          <FactRow>
            <FactText $tone="label" $track={0.05}>Торговые точки</FactText>
            <FactText $tone="strong" $gap={26}>3</FactText>
          </FactRow>
        </Facts>

        <DatesHeader>
          <DatesTitle>Свободные даты</DatesTitle>
          <WeekLink>За неделю<CalendarIcon /></WeekLink>
        </DatesHeader>

        <Card>
          <WeekNav>
            <Chevron back />
            <WeekRange>23 мая - 29 мая 2022г.</WeekRange>
            <Chevron />
          </WeekNav>
          <WeekGrid $top={38}>
            {days.map(([number, name]) => (
              <Day key={number}>
                <DayNumber>{number}</DayNumber>
                <DayName>{name}</DayName>
              </Day>
            ))}
          </WeekGrid>
          <WeekGrid $top={16}>
            {schedule.map(({ food, slots }) =>
              slots.map((state, i) => <ScheduleSlot key={`${food}${i}`} food={food} state={state} layer={10 - i} />)
            )}
          </WeekGrid>
          <BookButton>Забронировать</BookButton>
        </Card>
      </Sheet>
    </Screen>
  );
}
